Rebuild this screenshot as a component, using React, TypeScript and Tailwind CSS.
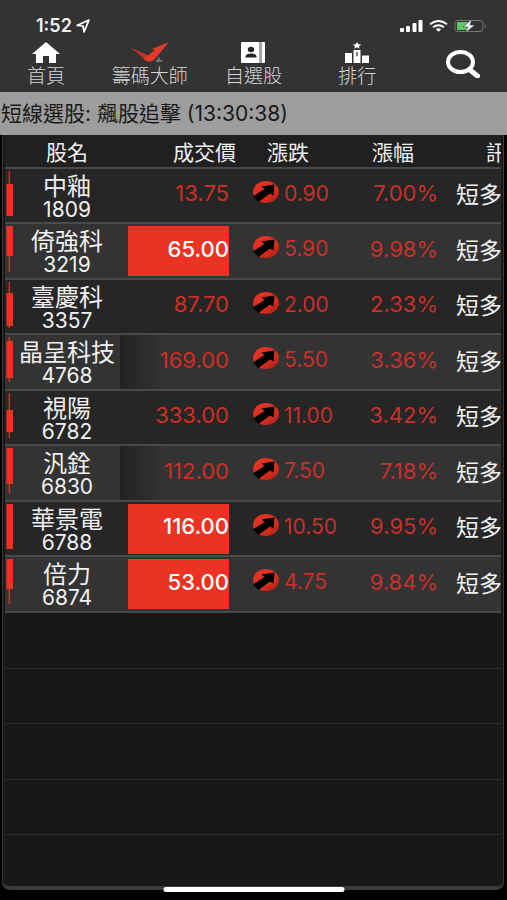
import React from 'react';

type Candle = { high: number; top: number; bottom: number; low: number };

type Stock = {
  name: string;
  code: string;
  price: string;
  change: string;
  percent: string;
  signal: string;
  limitUp?: boolean;
  flash?: boolean;
  candle: Candle;
};

const stocks: Stock[] = [
  { name: '中釉', code: '1809', price: '13.75', change: '0.90', percent: '7.00%', signal: '短多', candle: { high: 0, top: 13, bottom: 45, low: 45 } },
  { name: '倚強科', code: '3219', price: '65.00', change: '5.90', percent: '9.98%', signal: '短多', limitUp: true, candle: { high: 0, top: 0, bottom: 30, low: 46 } },
  { name: '臺慶科', code: '3357', price: '87.70', change: '2.00', percent: '2.33%', signal: '短多', candle: { high: 0, top: 11, bottom: 44, low: 46 } },
  { name: '晶呈科技', code: '4768', price: '169.00', change: '5.50', percent: '3.36%', signal: '短多', flash: true, candle: { high: 0, top: 4, bottom: 41, low: 45 } },
  { name: '視陽', code: '6782', price: '333.00', change: '11.00', percent: '3.42%', signal: '短多', candle: { high: 0, top: 17, bottom: 39, low: 45 } },
  { name: '汎銓', code: '6830', price: '112.00', change: '7.50', percent: '7.18%', signal: '短多', flash: true, candle: { high: 0, top: 0, bottom: 36, low: 45 } },
  { name: '華景電', code: '6788', price: '116.00', change: '10.50', percent: '9.95%', signal: '短多', limitUp: true, candle: { high: 0, top: 0, bottom: 45, low: 45 } },
  { name: '倍力', code: '6874', price: '53.00', change: '4.75', percent: '9.84%', signal: '短多', limitUp: true, candle: { high: 0, top: 0, bottom: 30, low: 45 } },
];

const emptyRows = [1, 2, 3, 4];

function classNames(...classes: (string | false | undefined)[]) {
  return classes.filter(Boolean).join(' ');
}

function HomeIcon() {
  return (
    <svg viewBox="0 0 28 21" className="h-[21px] w-7" fill="#fff" aria-hidden="true">
      <path d="M14 0 28 12h-4v9h-7v-7h-6v7H4v-9H0z" />
    </svg>
  );
}

function BirdLogo() {
  return (
    <svg viewBox="0 0 40 21" className="h-[21px] w-10" aria-hidden="true">
      <path d="M1 6 18 13.500 25 8 22 7 39 0 24 18Q21 21 16 19Q9 11 1 6Z" fill="#e8382a" />
      <path d="M1 6 18 13.500 14 16Q8 10 1 6Z" fill="#c02d22" />
      <path d="M25.500 20 29 14.500l1 3 4 1.500-4 1z" fill="#777" />
    </svg>
  );
}

function ContactsIcon() {
  return (
    <svg viewBox="0 0 24 21" className="h-[21px] w-6" aria-hidden="true">
      <path d="M1 0h17v21H1a1 1 0 0 1-1-1V1a1 1 0 0 1 1-1zM20.500 0H23a1 1 0 0 1 1 1v19a1 1 0 0 1-1 1h-2.500z" fill="#fff" />
      <path d="M18 0h2.500v21H18z" fill="#a8a8a8" />
      <ellipse cx="10" cy="7.500" rx="3.200" ry="2.800" fill="#222" />
      <path d="M4.500 15.500v-1.500c1.500-3.300 9.500-3.300 11 0v1.500z" fill="#222" />
    </svg>
  );
}

function RankingIcon() {
  return (
    <svg viewBox="0 0 24 21" className="h-[21px] w-6" aria-hidden="true">
      <path d="M0 11h7v10H0zM8.500 8h7v13h-7zM17 13.500h7V21h-7z" fill="#fff" />
      <path d="M12 0l1.300 2.300 2.900.2-2.200 1.700.8 2.500L12 5.300 9.200 6.700l.8-2.500L7.800 2.500l2.900-.2z" fill="#fff" />
      <path d="M11 10.500l1.600-.8v4.500h-1.200v-3z" fill="#333" />
    </svg>
  );
}

function StatusBar() {
  return (
    <div className="flex h-10 items-center justify-between pt-3 pr-5 pl-9">
      <div className="flex items-center gap-1">
        <span className="text-lg leading-5 font-semibold">1:52</span>
        <svg viewBox="0 0 13 13" className="size-3.5" fill="none" stroke="#fff" strokeWidth="1.600" strokeLinejoin="round" aria-hidden="true">
          <path d="M12 1 7.500 12 6.500 6.500 1 6z" />
        </svg>
      </div>
      <div className="flex items-center gap-1.5">
        <svg viewBox="0 0 23 12" className="h-3 w-[23px]" fill="#fff" aria-hidden="true">
          <rect x="0" y="8" width="4" height="4" rx="1" />
          <rect x="6" y="6" width="4" height="6" rx="1" />
          <rect x="12.500" y="3" width="4" height="9" rx="1" />
          <rect x="18.500" y="0" width="4" height="12" rx="1" />
        </svg>
        <svg viewBox="0 0 19 12" className="h-3 w-[19px]" fill="none" stroke="#fff" strokeWidth="2" aria-hidden="true">
          <path d="M1 4.300Q9.500-2.300 18 4.300M4 7.300q5.500-4.200 11 0" />
          <path d="M6.800 9.200q2.700-1.700 5.400 0L9.500 11.800z" fill="#fff" stroke="none" />
        </svg>
        <svg viewBox="0 0 33 14" className="h-3.5 w-[33px]" aria-hidden="true">
          <rect x="1" y="1.500" width="28" height="11" rx="3" fill="none" stroke="#777" />
          <path d="M31 5q2 2 0 4z" fill="#777" />
          <rect x="3" y="3" width="11" height="8" rx="1" fill="#5fc763" />
          <path d="M18 0 9 8h5l-3 6L21 6h-5z" fill="#fff" stroke="#333" strokeWidth=".6" />
        </svg>
      </div>
    </div>
  );
}

const navItems = [
  { label: '首頁', icon: <HomeIcon /> },
  { label: '籌碼大師', icon: <BirdLogo /> },
  { label: '自選股', icon: <ContactsIcon /> },
  { label: '排行', icon: <RankingIcon /> },
];

function NavBar() {
  return (
    <nav className="-mx-1.5 grid h-[52px] grid-cols-5">
      {navItems.map((item) => (
        <a key={item.label} href="#" className="flex flex-col items-center gap-0.5 pt-0.5 text-[#d6d6d6]">
          {item.icon}
          <span className="text-[19px] leading-6 font-light whitespace-nowrap">{item.label}</span>
        </a>
      ))}
      <button type="button" aria-label="搜尋" className="flex items-center justify-center pb-1 pl-1">
        <svg viewBox="0 0 34 28" className="h-7 w-[34px]" fill="none" stroke="#fff" aria-hidden="true">
          <ellipse cx="14.500" cy="12" rx="12.500" ry="10" strokeWidth="4" />
          <path d="M23.500 19.500 31.500 26" strokeWidth="5" strokeLinecap="round" />
        </svg>
      </button>
    </nav>
  );
}

function CandleBar({ candle }: { candle: Candle }) {
  return (
    <svg viewBox="0 0 9 46" className="mt-0.5 h-[46px] w-[9px]" fill="#ea3323" aria-hidden="true">
      <rect x="3.500" y={candle.high} width="1.600" height={candle.low - candle.high} opacity=".8" />
      <rect x="1.500" y={candle.top} width="6.500" height={candle.bottom - candle.top} />
    </svg>
  );
}

function UpIcon() {
  return (
    <svg viewBox="0 0 28 24" className="mb-1 h-6 w-7 shrink-0" aria-label="漲">
      <defs>
        <linearGradient id="up" x1="0" y1="0" x2="1" y2="1">
          <stop offset="0" stopColor="#e83626" />
          <stop offset=".65" stopColor="#d62c1c" />
          <stop offset="1" stopColor="#a01c12" />
        </linearGradient>
      </defs>
      <ellipse cx="14" cy="12" rx="13" ry="11" fill="url(#up)" />
      <path d="M22.500 4.500 21.500 15.500 18 13.500 6.500 22 1 16.500 12.500 9 9.500 6.500z" fill="#000" />
    </svg>
  );
}

function StockRow({ stock }: { stock: Stock }) {
  return (
    <tr className="h-[55px] border-t-2 border-[#4a4a4a] bg-[#262626] even:h-14 even:bg-[#333]">
      <td className="align-top">
        <CandleBar candle={stock.candle} />
      </td>
      <td className="pt-1 text-center whitespace-nowrap">
        <div className="text-2xl leading-6">{stock.name}</div>
        <div className="text-[21px] leading-[22px]">{stock.code}</div>
      </td>
      <td className={classNames('pl-2', stock.flash && 'bg-linear-to-r from-[#232323] to-[#333] to-40%')}>
        <div
          className={classNames(
            'flex h-[50px] items-center justify-end pb-1 text-[22px]',
            stock.limitUp ? 'bg-[#ea3323] font-medium text-white' : 'text-[#d02e22]'
          )}
        >
          {stock.price}
        </div>
      </td>
      <td className="pb-1 pl-[23px]">
        <div className="flex items-center gap-1 text-[21px] text-[#c8302a]">
          <UpIcon />
          {stock.change}
        </div>
      </td>
      <td className="pb-1 text-right text-[22px] text-[#c8302a]">{stock.percent}</td>
      <td className="pl-[18px] text-[23px] whitespace-nowrap">{stock.signal}</td>
    </tr>
  );
}

export default function App() {
  return (
    <div className="relative flex min-h-screen flex-col overflow-hidden bg-black font-[Inter,'Noto_Sans_CJK_TC',sans-serif] text-[#f0f0f0]">
      <header className="bg-[#333]">
        <StatusBar />
        <NavBar />
      </header>

      <h1 className="h-[43px] bg-[#9d9d9d] pl-px text-[21px] leading-[43px] whitespace-nowrap text-[#181818]">
        短線選股: 飆股追擊 (13:30:38)
      </h1>

      <main className="mr-[3px] mb-2.5 ml-0.5 flex-1 overflow-hidden rounded-b-lg border-x border-b-4 border-[#3a3a3a] bg-[#181818] px-0.5">
        <div className="overflow-hidden">
          <table className="w-full table-fixed border-collapse">
            <colgroup>
              <col className="w-[9px]" />
              <col className="w-[106px]" />
              <col className="w-[109px]" />
              <col className="w-[111px]" />
              <col className="w-[98px]" />
              <col />
            </colgroup>
            <thead>
              <tr className="h-[33px] bg-[#202020] text-left align-bottom text-[21px] leading-7 whitespace-nowrap">
                <th />
                <th className="pt-1 text-center font-normal">股名</th>
                <th className="pt-1 pl-[53px] font-normal">成交價</th>
                <th className="pt-1 pl-[38px] font-normal">漲跌</th>
                <th className="pt-1 pl-8 font-normal">漲幅</th>
                <th className="pt-1 pl-12 font-normal">訊</th>
              </tr>
            </thead>
            <tbody className="border-b-2 border-[#4a4a4a]">
              {stocks.map((stock) => (
                <StockRow key={stock.code} stock={stock} />
              ))}
            </tbody>
          </table>
        </div>
        {emptyRows.map((row) => (
          <div key={row} className="h-[55px] border-b border-[#2c2c2c] even:h-14" />
        ))}
      </main>

      {/* home indicator */}
      <div className="absolute bottom-2 left-1/2 h-[5px] w-[181px] -translate-x-1/2 rounded-full bg-white" />
    </div>
  );
}
